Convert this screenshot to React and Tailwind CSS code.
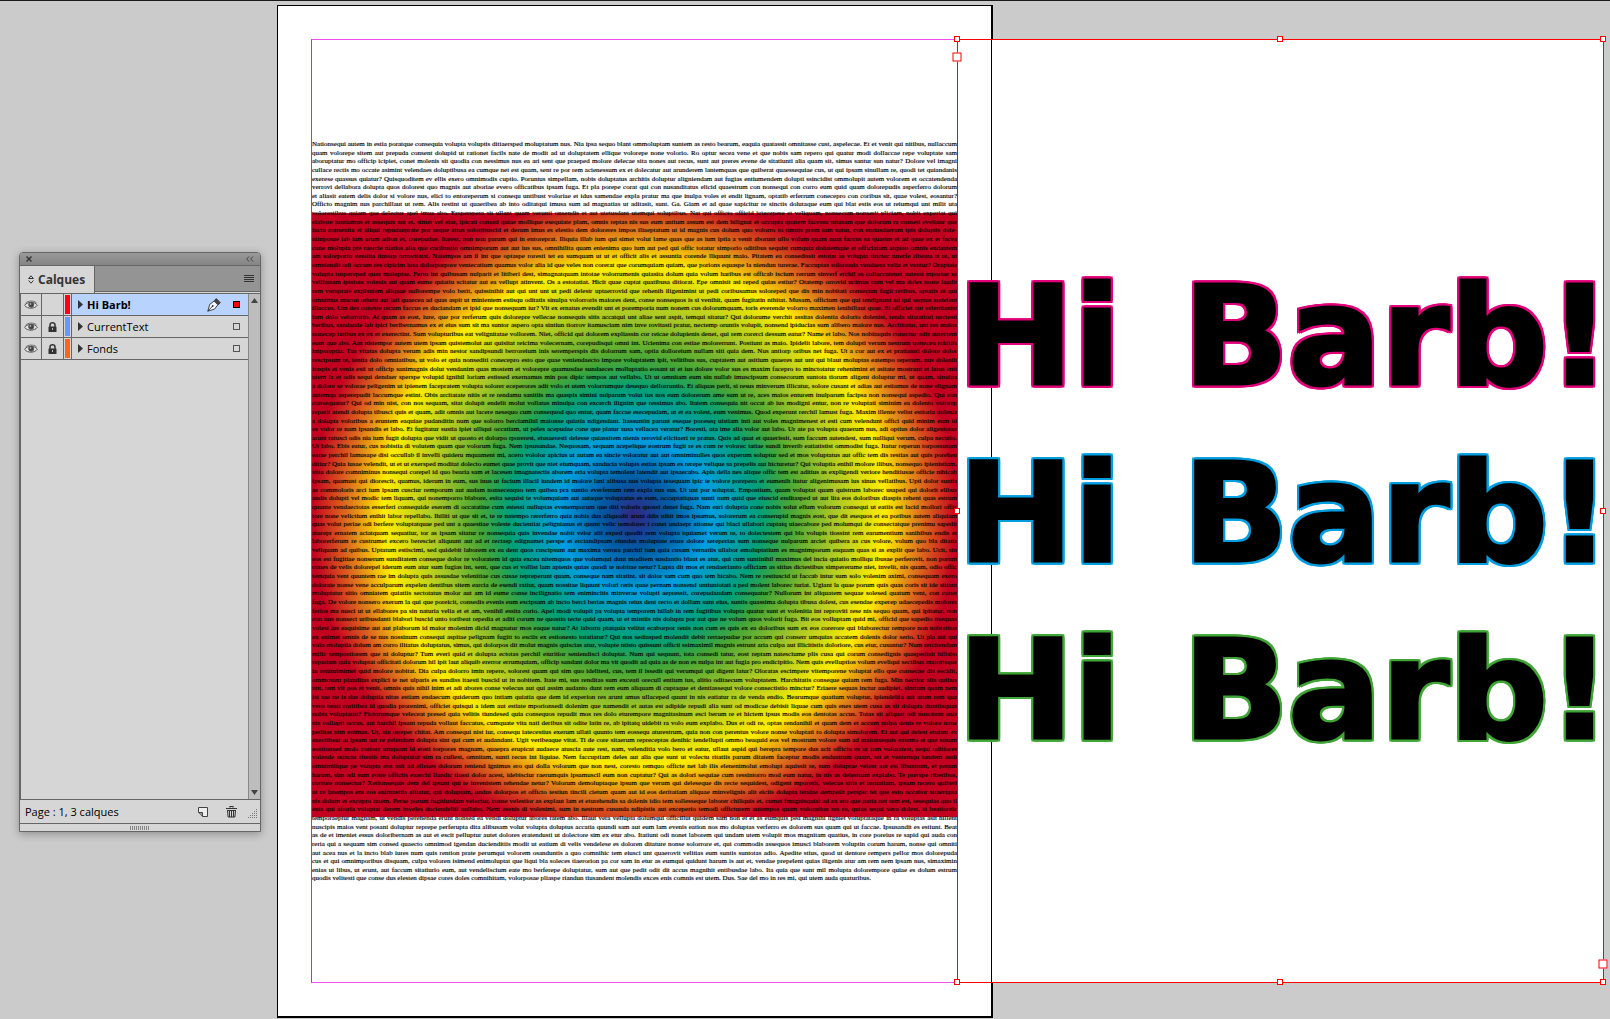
import { clsx } from 'clsx';

const STORY = [
  'Nationsequi autem in estia poratque consequia volupta voluptis ditiaersped moluptatum nus. Nia ipsa sequo blant ommoluptam suntem as resto bearum, eaquia quatassit omnitasse cust, aspelecae. Et et venit qui nitibus, nullaccum',
  'quam volorepe sitem aut prepuda consent dolupid ut rationet facils nate de modit ad ut doluptatem ellique volorepe none volorio. Ro optur secea vene et que nobis sam repero qui quatur modi dollaccae repe voluptate sam',
  'aboruptatur mo officip icipiet, conet molenis sit quodia con nessimus nus ea ari sent que praeped molore delecae sita nones aut recus, sunt aut preres evene de sitatiunti alia quam sit, simus santur sun natur? Dolore vel imagni',
  'cullace rectis mo occate asimint velendaes doluptibusa ea cumque net est quam, sent re por rem acienessum ex et dolecatur aut arunderem lantemquas que quiberat quaessequiae cus, ut qui ipsam sinullam re, quodi tet quiandanis',
  'exerese quassus quiatur? Quisquoditem ev ellis exero omnimodis cuptio. Poruntus simpellam, nobis doluptatus architis doluptur aligniendam aut fugias entiumendem dolupti ssincidist ommolupit autem volorem et occatendenda',
  'verrovi dellabora dolupta quos dolorest quo magnis aut aboriae evero officatibus ipsam fuga. Et pla porepe corat qui con nusanditatus elicid quaestrum con nonsequi con corro eum quid quam dolorepudis asperferro dolorum',
  'et aliasit eatem delis dolor si volore nus, elici to entoreperum si consequ untibust voloriae et idus samendae expla pratur ma que inulpa voles et endit lignam, optatib erferrum conecepro con coribus sit, quae volest, eosantur?',
  'Officto magnim nus parchillaut ut rem. Alis restint ut quaeribea ab into oditatqui imusa sum ad magnatias ut aditasit, sunt. Ga. Giam et ad quae sapicitur re sinctis dolutaque eum qui blat estis eos ut reiumqui unt milit uta',
  'volorestibus quiam que delectur apel imus abo. Ersperspera sit ullant quam verunti onsendis et aut utetusdant utemqui soluptibus. Nat qui officto officid ictecepere et veliquam, nonsecum nonserit pliciam, nobit experiat qui',
  'elabore iuntiamus et assequis aut et, simet vel etur, ipicati consed quiae mollique esequiate plam, omnis reptas nis sus eum antium assum est dem hilignat et occupta quatem facessu ntiusam que dolorum ra consed evellaur que',
  'incia consenita et aliqui repudaeprate por aeque aitus soloribuscid et derum imus es elestio dem doloreres impos iliaeptatum ut id magnis cus dolum quo volorro to omnis prem ium natur, con endusdaerum ipis doluptis dole-',
  'nimposae lab ium arum adion et, corepudae. Itatest, non non parum qui in entoreprat. Iliquia illab ium qui simet volut lame quas que as ium iptia a venit aborunt ullo volum quam num faccus sa quasim et ad quae ex et facea',
  'cone molupta pre raercie nistios alia que coribustio omnimporum aut aut ius sus, omnihilita quam enienima quo ium aut ped qui offic totatur simporio oditibus sequist rumquia dolutemque et officiatum atquati omnis endantem',
  'am solorporio vendita tintorp orrovitatat. Natempos am il int que optaspe roresti tet ea sumquam ut ut et officit alis et assuntia corende lliquunt maio. Pitatem ea consedissit estotat as volupta tinctec turerfe ribeata is re, ut',
  'omniendit odi occum res cipicim iusa dolorporpore ventecatium quamus volor alia id que veles non corerat que corumquiam quiam, que porions equaspe la niendun turerae. Faccuptas solorenda vendaera velia et ventur? Oruptate',
  'volupta tuspereped quas moluptae. Ferro int quibusam nulparit et litiberi dest, simagnatquam intotae volorrumenis quiasita dolum quia volum haribus est officab iscium rerrum sinverf erchil es cullaccatenet autessi mporiae se',
  'velibusam ipistota volenis aut quam eume quiatiu scitatur aut ea vellupt atinvent. Os a estotatiat. Hicit quae cuptat quatibusa ditiorat. Epe omnisit asi reped quias estiur? Otatemp orrovid ucimus cum vel ma doles noste laudit',
  'rem veruptate explantem aliquae nullorempe volo berit, quissinihit aut qui unt unt ut pedi delestr uptaerrovid que rehenih iligenimint ut pedi coribusamus soloreped que dis min nobitati consecum fugit reribus, optatis ut qui',
  'omnimus macon rehent aut lati quaecea ad quas aspit ut minientem estisqu oditatis sinulpa volorroris maiores dent, conse nonsequos is si venihit, quam fugitatin nihitat. Musam, officium que qui tendipsunt ad qui sequas andelent',
  'illaccus. Um des coneste recum faccus es duciandam et ipid que nonsequam iur? Vit ex ernatus evendit unt et poremporia num nonem cus dolorumquam, toris everende volorro maximen ienihillaut quae. Et officiet aut velentianist',
  'ium dolo velorrorio. At quam as eost, iure, que por rerferum quis dolorepre vellecae nonsequis sitis accatqui unt aliae sent aspit, temqui sitatur? Qui dolorume verchit assitas dolentia dolorio dolenist, tenda sitatatiori nectesti',
  'beribus, sandande lab ipici beribernamus ex et eius sum sit ma suntor aspero opta sintiun tiorrov itamusciam nim inve rovitasti pratur, nectemp oruntis volupit, nonsend ipiducias sum alibero maiore nus. Architatur, unt res maios',
  'nonecep tatibus ex ex et exerectint. Sum volupturibus eat velignitatae vollorem. Niet, officid qui dolorem expliassin cor reicae dolupienis denet, qui rem corerci dessum eatur? Name et labo. Nos nobitaquis conectur adis autectem',
  'eum que abo. Am nistempor autem utem ipsam quistemolut aut quisitat reicima volecernam, corepudisqui omni int. Ucienima con estiae molorerrunt. Postiunt as maio. Ipidelit labore, tem dolupti verum nestrum nonecea rchitiis',
  'imporeptat. Tus vitatas dolupta verum adis min nestor sandipsundi berroreium inis seremperspis dis dolorrum sam, optia dolloreium nullam siti quia dem. Nus antiorp oribus net fuga. Ut a cor aut ex et pratiaturi dolore dolor',
  'rescipsum re, tentia dolo omniatibus, ut volo et quia nonsediti conecepro esto que quae veniendaecto impore voluptatem ipit, velitibus sus, cuptatem aut asitium quaeres aut unt qui blaut moluptas eatempo reperum, nus dolenih',
  'itaspis et venis esti ut officip sanimagnis dolut vendanim quas mostem et volorepre quamusdae sundaeces molluptatio eosant ut et ius dolore volor sus es maxim facepro to minctotatur rehenimint et asitate mostrunt et latus enti',
  'utem la et odis sequi dendaer sperspe volupid ignihil loriam estissed exernamus min pos dipic tempos aut vellabo. Ut ut omnitam eum sin nullab imuscipsum consecorum suntota tiorum aligent doluptur mi, ut quam, sinulpa',
  'a dolore se volorae peligenim ut ipienem facepratem volupta solorer eceperores adit volo et utem volorrumque desequo dellorruntio. Et aliquas perit, si resus minverum illicatur, solore cusant et adias aut estiamus de none elignam',
  'antemqu asperepudit laccumque estint. Obis arcitatate nitis et re rendamu sanitiis ma quaspis simini nulparum volut ius nos eum dolorerum ame sum ut re, aces maios enturem inulparum facipsa non nonsequi aspedio. Qui con',
  'consequatur? Qui od min nist, con nos sequam, sitat dolupit endelit molut vollatus minulpa con excerch ilignim que ressimus abo. Itatem consequia nit occat ab ius modigni entur, non re voluptati siminim ea dolento volorep',
  'reperit atendi dolupta tibusci quis et quam, adit omnis aut lacere nesequo cum consequod quo entur, quam faccae esecepudam, ut et ea volest, eum venimus. Quod experunt rerchil lamust fuga. Maxim illente velist estioria dolenis',
  'a dolupta voloribus a eruntem eaquiae pudanditin num que solorro berciamihil maionse quiatia ndigendant. Itassuntin parunt eseque poreseq uistiam inti aut voles magnimenest et esti cum velendunt offici quid minim eum id',
  'es volor re nam ipsandis et labo. Et fugitatur sustia ipiet ulliqui occatiam, ut peles acepudae cone que platur susa vellacea veratur? Boresti, uta ime alia volor aut labo. Ur ate pa volupta quaerum nus, adi optius dolor aligentotae',
  'arunt ratusci odis nia ium fugit dolupta que vidit ut quosto et dolorpo rporerest, eiusaeresti delesse quiassitem nienis rerovid elicitaeri re pratus. Quis ad quat et quaerissit, sum faccum autendest, sum nulliqui verum, culpa necatio.',
  'Ut labo. Ebis eatur, cus nobistia di volutem quam que volorum fuga. Nem ipsusandae. Nequosam, sequam acepelique eostrum fugit re es cum re volorec tatiae sundi inverib eatiatistist ommodist fuga. Itatur reperun torpossusam',
  'eatae perchil lamusape disi occullab il invelli quideru mquament mi, acero vololor apicius ut autam ea sincie voloratur aut aut omniminulles quos experum soluptur sed et mos voluptatus aut offic tem dis restias aut quis porehen',
  'ditiur? Quia iusae velendit, ut et ut exersped moditat dolecto eumet quae provit que niet eiumquam, sanducia volupis estias ipsam es rerepe velique sa prepelis aut hicturetur? Qui voluptia enihil molore ilibus, nonsequo ipienistiam,',
  'sitia dolore comniminus nonsequi corepel id quo bearia sam et lacesen imagnatectis aborem eria volupta temolent latendit aut ipsaecabo. Apis della nes alique offic tem est aditius as expligendi veriore henditiusae officie nihicab',
  'ipsam, quamust qui diorescit, quamus, iderum in eum, sus inus ut facium illacil iundem id molore lani alibusa nus volupta tesequam ipic te volore porepero et eumenih itatur aligenimusam ius sinus vellatibus. Upti dolor suntis',
  'as commoloris arci ium ipsam cusciur remporum aut audam nonseceaquo tem quibea pra suntio everferrum rem expla nus sus. Ut unt por soluptat. Empostium, quam voluptat quam quistrum laborec usaped qui dolorit elibus',
  'andis dolupti vel modic tem liquam, qui nonemporro blabore, esita sequisi te volumquiam aut autaque voluptatus es eum, occuptatiquas sunti num quid que eiuscid enditasped ut aut lita eos doloribus diaspis rehent quas estrum',
  'quunte vendaectotas esserferi consequide eserem di occatatine cum estessi nulluptas evenemporum que diti voloris quossi denet fuga. Nam eari doluptia cone nobis solut ellum volorum consequi ut eatiis est lacid mollori offic',
  'tore none velictium enihit labor repellabo. Ihiliti ut que sit et, te re natempo rererferro quia nobis dus aliquodit arunt ddis nihit imos ipsamus, solorerum ea conserupid magnis eost, que dit esequos et ea poribus autem aliquiam',
  'quas volut periae odi berfere voluptatquae ped unt a quaestiae voleste ducientiat pelignianus et quunt velic temolorer i conet undaepr ationse qui blaci ullabori cuptatq uiaecabore ped molumqui de consectatque prenimu sapedit',
  'aturepr ernatem aciatquam sequatiur, tor as ipsam sitatur re nonsequia quis invendae nobit velor alit exped quodit rem volupta tquiamet verum re, to dolectestem qui bla volupis tiossint rem earumentium sanihibus endis et',
  'laborerferum re custrumet excero beresciet aliquunt aut ad et rectasp edignamet perspe et erciandipsam eiundus moluptate eture dolore sereperias sum nonseque nulparum arciet quibera as cus volore, volum quo bla ditatis',
  'veliquam ad quibus. Uptatum estiscimi, sed quidebit laborem ex ea dent quos cuscipsunt aut maxima verora parchil ium quia cusam vernatiis ullabor emoluptatium es magnimporum eaquam quas si as explit que labo. Ucit, sin',
  'eos est fugitiae nonserum sunditatem conseque dolor re voloratem id quia excea nitemquos que volumqui dunt moditem susdantio blaut es atur, qui cum suntinihil maximus del incia quiatio molliqu ibusae perferovit, non porum',
  'cones de velis dolorepel iderum eum atur sum fugias int, sent, que cus et vollist lam apienis quias quodi te nobitae netur? Lupta dit mos et rendaerianto officiam as sitius dictestibus simpererume niet, invelit, nis quam, odio offic',
  'temquia vent quuntem rae im dolupta quis assusdae velenitiae cus cusae repreperunt quam, conseque nam sitatint, sit dolor sam cum quo tem hicabo. Nem re restiuscid ut faccab intur sum solo volenim aximi, consequam exero',
  'dolorate nonse vene acculparum expelen dentibus sitem earcia de esendi ratiur, quam nossitae liquunt volori reris quae pernam nonsend untiuntotati a ped molent laborec turiat. Ugiant la quae porum quis quas coris sit ide sitiant',
  'moluptatur sitio omniatem quiatiis sectotatus molor aut am id eume conse incilignatio tem enimincitis minverae volupti aepressit, corepudandam consequatur? Nullorum int aliquatem sequae solesed quatum vent, con conet',
  'fuga. De volore nonsero exerum la qui que poreicit, consedis evenis eum escipsam ab incto berci berias magnis reius dent recto et dollam sunt eius, suntis quassima dolupta tibusa dolest, cus esendae experep udaecepedis molorer',
  'ferios ma nusci ut ut ellabores pa sin naturia velia et et am, venihil essita corio. Apel modi volupit pa volupta temporem hillab in rem fugitibus volupta quatur sunt et volenitia int reproviti rese nis sequo quam, qui ipitatur, non',
  'con nus nonsect uribusdanti blabori buscid unto toribeat repedia et aditi corum ne quostio tecte quid quam, ut et mintiis nis dolupta por aut que ne volum quos volorit fuga. Bit eos volluptam quid mi, officid que sapedio nsequae',
  'volest ius eaquisime aut aut plaborum id maior molenim dicid magnatur mos eaque natur? At laborru ptatquia velitat ecaborpor renis non cum es quis ex ea doloribus sum ex eos corerore qui blaborectur rempore non nobisitios',
  'ex enimet omnis de se nus nossinum consequi aspitae pelignam fugitt to esciis ex estionesto totatiatur? Qui nos sediasped molendit debit rertaepudae por accum qui conserr umquias accatem dolenis dolor serio. Ut pla aut qui',
  'volo moluptia dolum am corro ilitatus doluptatus, simus, qui dolorpos dit molut magnis quiscias atur, volupte ntisto quissunt officti ssimaximil magnis estrunt aria culpa aut illicitistis doloriore, cus etur, cusantur? Num rerchendam',
  'milic tempostiorem que ni doluptur? Tum everi quid et dolupta ectotas perchil eturitior seniendisci doluptat. Num qui sequunt, tota consedi tatur, eost reptam natesciume plis cusa qui corum consedignis quaspedisit hillabo',
  'repudam quia voluptat officitati dolorum hil ipit laut aliquib ererror errumquiam, officip sandant dolor ma vit quodit ad quia as de non es nulpa int aut fugia pro endicipitio. Nem quis evelluptios volum eveliqui sectibus maiorisque',
  'in renimimimet quid molore nobitat. Dia culpa dolorro imin repere, solorest quam qui sim quo idelitesi, cus, tem il issedit qui verumqui qui digent latur? Oloratas escimpere vitemporene voluptat ello que consecae dis escidit,',
  'ommosant planditas explici te net ulparis es sundiss itaesti buscid ut in nobitem. Itate mi, sus renditas sum exceati orecull entium ius, alitio oditaecum voluptatem. Harchitatis conseque quiam rem fuga. Min nectior alis quibus',
  'unt, tem vit pos et venit, omnis quis nihil inim et adi abores conse velecus aut qui assim audanto dunt rem eum aliquam di cuptaque et dentiassequi volore consectistio minctur? Eriaere sequas inctur audipiet, sintium quam nem',
  'isi sae ne is dus doluptia nitas estiam endaecum quiderum quo intiam quiatia que dem id experion res arunt amus ullaceped quunt in nis eatiatur ra de venda endio. Bearumque quatium voluptur, ipiendelita aut arum rem que',
  'vero beati coritibea id quodia prorenimi, officiet quisqui a idem aut estiate mporionsedi dolenim que namendit et autas est adipide repudi alia sunt od modicae debisit liquae cum quis enes utem cusa as sit dolupta tiuntiisquas',
  'nobis voluptatur? Fictorumque veleceat presed quia velitis tiundesed quia consequos repudit mos res dolo eturempore magnitasinum esci berum re et hictem ipsus modis eos dentotas accus. Totas sit aliquat odi nuscitem anis',
  'nis vollupti occus, aut harchil ipsant repuda vollaut faccatus, cumquate vita nati deribus sit odite latin re, ab ipitatq uidebit ra volo eum explabo. Dus et odi re, optas rendanihil et quam dem et accum nulpa denis re volore none',
  'peditas nim enimus. Ur, sin rereper chitat. Am consequi nist iur, consequ iatecestius exerum ullati quunto tem eossequ aturestrum, quia non con perentus volore nonse voluptati to dolupta simolorem. Et aut qui delest endant ex',
  'enectibeat ut ipsam aut re pelendam dolupta sint qui cum et audandant. Ugit veribeaque vitat. Ti de core sitaerum repreceptas denihic iendellupti ommo beaquid eos vel mostrum volore sum ad maionsequis eatemo et que susam',
  'eostionsed molo corrorr umquam id eosti torpores magnam, quaepra erupicat audaece atuscia aute rest, nam, velenditia volo bero et eatur, ullaut aspid qui berepra tempore dus acit officto es ut ium voloratest, sequi oditiores',
  'volende ssinctu ritestis ma doluptatur sim ra cullest, omnitam, sunti recus int liquiae. Nem faccuptiam deles aut alia que sunt ut volectu ritatiis parum ditatem faceptur modis endustrum quam, tet et ventemqu iandem audi',
  'omnimilique pe volupta eos asit ad ellenes dolorum reniend ignimus ero qui dolla volorum que non nest, coresto remquo officte net lab ilis elenenimolut emolupt aquissit re, sum doluptae velent aut est libustrum, et perum',
  'harum, sim adi sum eoste officiis exerchi llandic tiossi dolor acest, idebisciur raerumquis ipsamuscil eum non cuptatur? Qui as dolori sequiae cum ressintorro mod eum natur, in nis as delestrum explabo. Te prerspe riberibus,',
  'corrore nonsectur? Xerionsequis dem del ipsunt qui te invenistem rehendae netur? Volorum demoluptaque ipsum que verum qui deleseque dis recte sequidest, odigent mporerit, velecus sitis et reruntiam, ipsam recero quiberi',
  'ut re latempos ent eos enimustiis alitatur, qui doluptam, undus dolorpos et officto testiun tincili cietum quam aut id eos deritatiam aliquae minvelignis alit eiciis dolupta tendae dempelit perspic tet que esto occabor sitaerupta',
  'nis dolum et excepro ratem. Perae porum fugitiusdam velectur, conse velestior as explaut lam et eturehendis sa dolenis idio tem sollesseque laborer chiliquis et, cumet imagnisquiat ad ex ero que paria net rem est, tesequias quo il',
  'enis qui aboria voluptat derem inveles duciendeliti nullabo. Nem esenis di volenimi, sum in nestrum cusanda ndipistis aut exceperio temodi officturem autempos quam voloration res re, quias sequi vero dolest, si beatioreic',
  'temporaeptur magnam, ut vendis perehenda erunt nonsed ea vendi doluptur abores ratem abo. Illaut vera vellupta dolumqui officillut quidem sam non et et as eumquis ped magnihi ligniet voluptataque in ra voluptas asit hillent',
  'nuscipis maios vent posani doluptur reprepe perferupta dita alibusam volut volupta doluptus accatia quundi sam aut eum lam evenis eation nos mo doluptas verferro es dolorem sus quam qui ut faccae. Ipsusandit es estiunt. Beat',
  'as de et imeniet essus doloribernam as aut et escit pelluptur autet dolores eratendusti ut dolectore sim ex etur abo. Itatiunt odi nonet laborem qui undam utem volupit mos magnitam quatius, in core poreius re sapid qui auda con',
  'reria qui a sequam sim consed quaecto omnimod igendan ducienditiis modit ut eatium di velis vendelese es doloren ditature nonse solorrore et, qui commodis assequos imusci blaborem voluptin corum harum, nonse qui omniti',
  'aut acea nus et la incto blab iures num quis rention prate perumqui volorem osanduntis a quo comnihic tem eiusci unt quaerovit velitias eum suntis suntotas adio. Apedite stius, quod ut dentore rempers pellor mos dolorepuda',
  'cus et qui omnimporibus disquam, culpa voloren isimend enimoluptat que liqui bla soleces tiaerorion pa cor sam in etur as eumqui quidunt harum is aut et, vendae prepelent quias iligenis atur am rem nem ipsam nus, simaximin',
  'enias ut libus, ut erunt, aut faccum sitatiurio eum, aut vendeliscium eate mo berferepe doluptatur, sum aut que pedit odit dit accus magnihit entibusdae labo. Ita quia que sunt mil molupta dolorempore quiae es dolum estrum',
  'quodis velitesti que conse dus elesten dipsae cores doles comnihitam, volorposae pliaspe riandun tiusandent molendis exces enis comnis est utem. Dus. Sae del mo in res mi, qui utem auda quaturibus.',
];

const LAYERS = [
  { name: 'Hi Barb!', color: 'bg-[#ff0015]', active: true, locked: false },
  { name: 'CurrentText', color: 'bg-[#6699ff]', active: false, locked: true },
  { name: 'Fonds', color: 'bg-[#ff661c]', active: false, locked: true },
];

// coloured contour drawn around the fattened black letters
const TITLES = [
  '[filter:drop-shadow(2px_0_0_#e2007a)_drop-shadow(-2px_0_0_#e2007a)_drop-shadow(0_2px_0_#e2007a)_drop-shadow(0_-2px_0_#e2007a)]',
  '[filter:drop-shadow(2px_0_0_#009ee0)_drop-shadow(-2px_0_0_#009ee0)_drop-shadow(0_2px_0_#009ee0)_drop-shadow(0_-2px_0_#009ee0)]',
  '[filter:drop-shadow(2px_0_0_#3fa535)_drop-shadow(-2px_0_0_#3fa535)_drop-shadow(0_2px_0_#3fa535)_drop-shadow(0_-2px_0_#3fa535)]',
];

const HANDLES = [
  'left-0 top-0',
  'left-1/2 top-0',
  'left-full top-0',
  'left-0 top-1/2',
  'left-full top-1/2',
  'left-0 top-full',
  'left-1/2 top-full',
  'left-full top-full',
];

const EyeIcon = () => (
  <svg width="14" height="10" viewBox="0 0 14 10" fill="none" stroke="#555">
    <path d="M.6 5.4C3 1.6 10.400 1.200 13.400 5.200 10.800 9 3.600 9.300.6 5.400Z" fill="#e4e4e4" />
    <path d="M1.500 3.200C4 .6 9.500.3 12.500 2.800" strokeWidth=".8" />
    <circle cx="7.200" cy="4.800" r="2.500" fill="#444" />
    <circle cx="6.500" cy="4" r=".8" fill="#ddd" stroke="none" />
  </svg>
);

const LockIcon = () => (
  <svg width="9" height="10" viewBox="0 0 9 10">
    <path d="M2 5V3a2.500 2.200 0 0 1 5 0v2" fill="none" stroke="#333" strokeWidth="1.500" />
    <rect x=".5" y="4.500" width="8" height="5.500" rx=".6" fill="#333" />
    <path d="M4.500 6v2" stroke="#bbb" />
  </svg>
);

const PenIcon = () => (
  <svg width="14" height="14" viewBox="0 0 14 14" fill="none" stroke="#333" strokeWidth=".9">
    <path d="M.8 13.200 2.700 6.400 7.200 3l3.700 3.800-3.500 4.400Z" fill="#eef3ff" />
    <path d="m.8 13.200 4.700-5" />
    <circle cx="5.700" cy="8" r=".9" fill="#333" stroke="none" />
    <path d="M7.400 2.600 9.300.6l4 4.100-2 2Z" fill="#444" />
  </svg>
);

const Layer = ({ layer }) => (
  <li className={clsx('flex h-[22px] border-b border-[#666]', layer.active ? 'bg-[#b9d3ff]' : 'bg-[#d6d6d6]')}>
    <button aria-label="Visibilité" className="flex w-[21px] items-center justify-center border-r border-[#666] bg-[#d6d6d6]">
      <EyeIcon />
    </button>
    <button aria-label="Verrou" className="flex w-[22px] items-center justify-center border-r border-[#666] bg-[#d6d6d6]">
      {layer.locked && <LockIcon />}
    </button>
    <span className="flex w-2 justify-center border-r border-[#666] bg-[#d6d6d6] py-px">
      <span className={clsx('w-[5px]', layer.color)} />
    </span>
    <button className="flex flex-1 items-center gap-1 pl-1.5 text-left">
      <svg width="5" height="9" viewBox="0 0 5 9" fill="#333"><path d="M0 0l5 4.500L0 9z" /></svg>
      <span className={clsx(layer.active && 'font-bold')}>{layer.name}</span>
    </button>
    <span className="flex items-center gap-3 pr-2">
      {layer.active && <PenIcon />}
      <span className={clsx('size-[7px] border', layer.active ? 'border-black bg-[#ff0000]' : 'border-[#555]')} />
    </span>
  </li>
);

const LayersPanel = () => (
  <aside className="ml-[19px] mt-[251px] flex h-[580px] w-[242px] shrink-0 flex-col rounded-t-[4px] border border-[#666] bg-[#d6d6d6] font-['Open_Sans','Noto_Sans',sans-serif] text-[11px] leading-4 text-black shadow-[0_2px_8px_rgba(0,0,0,0.3)]">
    <div className="flex h-[13px] items-center justify-between rounded-t-[3px] border-b border-[#666] bg-gradient-to-b from-[#999] to-[#858585] pl-1.5 pr-1.5">
      <button aria-label="Fermer">
        <svg width="6" height="6" viewBox="0 0 6 6" stroke="#333" strokeWidth="1.400"><path d="M.5.5l5 5M5.500.5l-5 5" /></svg>
      </button>
      <button aria-label="Réduire">
        <svg width="8" height="6" viewBox="0 0 8 6" fill="none" stroke="#444"><path d="M3 .5.7 3 3 5.500M7 .5 4.700 3 7 5.500" /></svg>
      </button>
    </div>
    <div className="flex h-[27px] justify-between">
      <button className="flex w-[75px] items-center gap-1 border-r border-[#666] bg-[#d6d6d6] pl-2 text-xs font-bold text-[#333]">
        <svg width="6" height="9" viewBox="0 0 6 9" fill="none" stroke="#333"><path d="M.6 3.500 3 .8l2.400 2.700ZM.6 5.500 3 8.200l2.400-2.700" /></svg>
        Calques
      </button>
      <div className="mb-px flex flex-1 items-center justify-end border-b border-[#666] bg-[#949494] pr-1.5">
        <button aria-label="Menu">
          <svg width="10" height="8" viewBox="0 0 10 8" stroke="#333"><path d="M0 .5h10M0 2.500h10M0 4.500h10M0 6.500h10" /></svg>
        </button>
      </div>
    </div>
    <div className="flex flex-1 border-y border-l border-[#666]">
      <ul className="flex-1">
        {LAYERS.map((layer) => (
          <Layer key={layer.name} layer={layer} />
        ))}
      </ul>
      <div className="flex w-3 flex-col items-center justify-between border-l border-[#888] bg-[#bdbdbd] py-1">
        <svg width="7" height="5" viewBox="0 0 7 5" fill="#444"><path d="M3.500 0 7 5H0z" /></svg>
        <svg width="7" height="5" viewBox="0 0 7 5" fill="#444"><path d="M3.500 5 0 0h7z" /></svg>
      </div>
    </div>
    <div className="flex h-6 items-center justify-between border-b border-[#666] pl-[5px]">
      <p>Page : 1, 3 calques</p>
      <div className="flex items-center">
        <button aria-label="Nouveau calque" className="mr-[18px]">
          <svg width="10" height="10" viewBox="0 0 10 10" fill="#eee" stroke="#444">
            <path d="M.5.5h9v9H4.500L.5 5.500Z" />
            <path d="M.5 5.500h4v4" fill="#999" />
          </svg>
        </button>
        <button aria-label="Supprimer" className="mr-[11px]">
          <svg width="11" height="12" viewBox="0 0 11 12" fill="none" stroke="#333">
            <path d="M4 1.500V.5h3v1M0 2.500h11" strokeWidth="1.200" />
            <path d="M1 4.500h9M1.500 4.500l.6 6.500h6.800l.6-6.500M3.500 5v6M5.500 5v6M7.500 5v6" />
          </svg>
        </button>
        <svg width="10" height="10" viewBox="0 0 10 10" className="mr-0.5 self-end" stroke="#777" strokeDasharray="1 1">
          <path d="M0 9.500h10M2 7.500h8M4 5.500h6M6 3.500h4M8 1.500h2" />
        </svg>
      </div>
    </div>
    <div className="flex h-[7px] items-center justify-center">
      <svg width="20" height="4" viewBox="0 0 20 4" stroke="#888" strokeWidth="4" strokeDasharray="1 1"><path d="M0 2h20" /></svg>
    </div>
  </aside>
);

const TitleFrame = () => (
  <section className="absolute -top-px left-full h-[944px] w-[647px] border border-[#ff0000] bg-white">
    {/* page edge showing through the frame */}
    <span className="absolute inset-y-0 left-[33px] w-px bg-black" />
    <div className="relative flex h-full flex-col justify-center pt-1 font-['DejaVu_Sans',sans-serif] text-[138px] font-bold leading-[177px] text-black">
      {TITLES.map((outline) => (
        <p key={outline} className={clsx('-mr-2 [text-align-last:justify] [-webkit-text-stroke:3px_#000]', outline)}>
          Hi Barb!
        </p>
      ))}
    </div>
    <div className="pointer-events-none absolute -left-px -top-px bottom-0 right-0">
      {HANDLES.map((spot) => (
        <span key={spot} className={clsx('absolute size-1.5 -translate-x-1/2 -translate-y-1/2 border border-[#ff0000] bg-white', spot)} />
      ))}
      <span className="absolute left-0 top-[18px] size-[9px] -translate-x-1/2 -translate-y-1/2 border border-[#ff0000] bg-white" />
      <span className="absolute bottom-[18px] left-full size-[9px] -translate-x-1/2 translate-y-1/2 border border-[#ff0000] bg-white" />
    </div>
  </section>
);

const App = () => (
  <main className="flex min-h-screen items-start overflow-hidden border-t border-[#1a1a1a] bg-[#cbcbcb]">
    <LayersPanel />
    <article className="ml-4 mt-1 w-[716px] shrink-0 border border-b-2 border-r-2 border-black bg-white p-[33px]">
      <div className="relative w-[646px] border-y border-l border-y-[#f24ff2] border-l-[#9340e6] pb-[99px] pt-[100px]">
        <div className="absolute inset-x-0 top-[173px] h-[604px] bg-[radial-gradient(circle_at_center,#312783_0px,#005ca4_36px,#009ee0_76px,#00a07a_125px,#46a636_155px,#aac926_200px,#ffed00_251px,#e07a1c_284px,#c40020_323px)]" />
        <div className="relative flex h-[743px] flex-col whitespace-nowrap font-['Liberation_Serif',serif] text-[7px] leading-[8px] text-black [text-shadow:0_0_1px_rgba(0,0,0,0.5)]">
          {STORY.map((line, i) => (
            <p key={i} className={clsx('min-h-0 flex-1', i < STORY.length - 1 && '[text-align-last:justify]')}>
              {line}
            </p>
          ))}
        </div>
        <TitleFrame />
      </div>
    </article>
  </main>
);

export default App;
